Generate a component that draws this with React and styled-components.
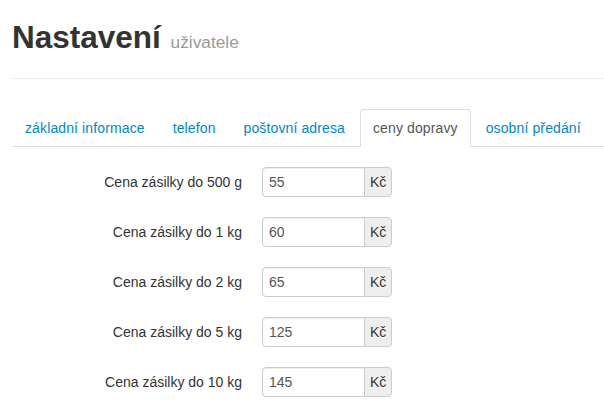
import React from "react";
import styled, { createGlobalStyle } from "styled-components";

const GlobalStyle = createGlobalStyle`
  html, body { margin: 0; padding: 0; background: #fff; }
  body {
    font-family: "Liberation Sans", Arial, Helvetica, sans-serif;
    font-size: 14px;
    line-height: 20px;
    color: #333;
    overflow: hidden;
  }
`;

const Page = styled.div`
  padding: 0 0 0 12px;
`;

const PageHeader = styled.div`
  padding: 17px 0 21px;
  margin: 0 0 30px;
  border-bottom: 1px solid #eee;
`;

const Title = styled.h1`
  margin: 0;
  font-size: 31.5px;
  line-height: 40px;
  font-weight: bold;
  color: #333;
  white-space: nowrap;
`;

const Sub = styled.small`
  font-size: 17.3px;
  line-height: 1;
  font-weight: normal;
  color: #999;
  margin-left: 1px;
`;

const Tabs = styled.ul`
  display: flex;
  list-style: none;
  margin: 0 0 20px;
  padding: 0;
  border-bottom: 1px solid #ddd;
`;

const TabItem = styled.li`
  margin-bottom: -1px;
  margin-right: 2px;
`;

const TabLink = styled.a`
  display: block;
  padding: 8px 12px;
  line-height: 20px;
  letter-spacing: 0.12px;
  border: 1px solid ${(p) => (p.$active ? "#ddd" : "transparent")};
  border-bottom-color: transparent;
  border-radius: 4px 4px 0 0;
  background: ${(p) => (p.$active ? "#fff" : "transparent")};
  color: ${(p) => (p.$active ? "#555" : "#0088cc")};
  text-decoration: none;
  white-space: nowrap;
  cursor: ${(p) => (p.$active ? "default" : "pointer")};
`;

const Form = styled.form`
  margin: 0 0 0 70px;
`;

const ControlGroup = styled.div`
  display: flex;
  margin-bottom: 20px;
`;

const Label = styled.label`
  width: 160px;
  padding-top: 5px;
  text-align: right;
  font-weight: normal;
  color: #333;
  flex-shrink: 0;
`;

const Controls = styled.div`
  margin-left: 20px;
`;

const InputAppend = styled.div`
  display: flex;
`;

const Input = styled.input`
  box-sizing: content-box;
  width: 89px;
  height: 20px;
  padding: 4px 6px;
  margin: 0;
  font-family: inherit;
  font-size: 14px;
  line-height: 20px;
  color: #555;
  background: #fff;
  border: 1px solid #ccc;
  border-radius: 4px 0 0 4px;
  box-shadow: inset 0 1px 1px rgba(0, 0, 0, 0.075);
  outline: none;
`;

const AddOn = styled.span`
  box-sizing: content-box;
  min-width: 16px;
  height: 20px;
  padding: 4px 5px;
  margin-left: -1px;
  font-size: 14px;
  line-height: 20px;
  text-align: center;
  color: #333;
  text-shadow: 0 1px 0 #fff;
  background: #eee;
  border: 1px solid #ccc;
  border-radius: 0 4px 4px 0;
`;

const tabs = [
  "základní informace",
  "telefon",
  "poštovní adresa",
  "ceny dopravy",
  "osobní předání",
];

const rows = [
  ["Cena zásilky do 500 g", "55"],
  ["Cena zásilky do 1 kg", "60"],
  ["Cena zásilky do 2 kg", "65"],
  ["Cena zásilky do 5 kg", "125"],
  ["Cena zásilky do 10 kg", "145"],
];

export default function App() {
  return (
    <Page>
      <GlobalStyle />
      <PageHeader>
        <Title>
          Nastavení <Sub>uživatele</Sub>
        </Title>
      </PageHeader>
      <Tabs>
        {tabs.map((t, i) => (
          <TabItem key={t}>
            <TabLink $active={i === 3}>{t}</TabLink>
          </TabItem>
        ))}
      </Tabs>
      <Form>
        {rows.map(([label, value]) => (
          <ControlGroup key={label}>
            <Label>{label}</Label>
            <Controls>
              <InputAppend>
                <Input defaultValue={value} />
                <AddOn>Kč</AddOn>
              </InputAppend>
            </Controls>
          </ControlGroup>
        ))}
      </Form>
    </Page>
  );
}
